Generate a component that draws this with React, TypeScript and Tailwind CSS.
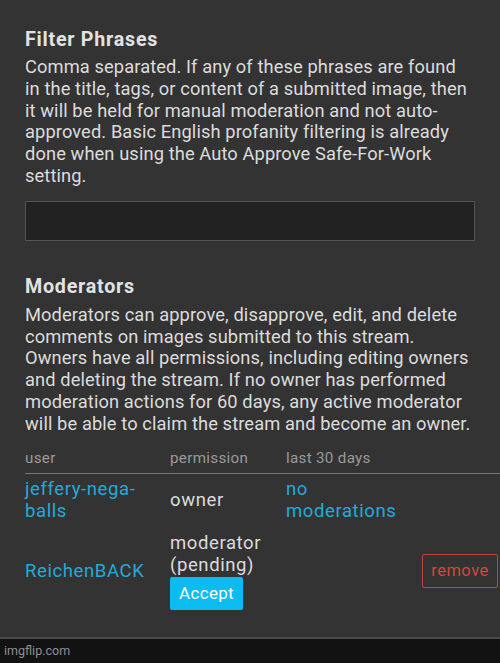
import React from 'react';

const moderators = [
    { user: 'jeffery-nega-balls', permission: 'owner', last: 'no moderations' },
];

const App = () => {
    return (
        <div className="w-[500px] h-[663px] bg-[#333333] flex flex-col overflow-hidden" style={{ fontFamily: 'Roboto, "Liberation Sans", sans-serif' }}>
            <div className="flex-1 pl-[25px]">
                {/* Filter phrases */}
                <div className="pr-[25px]">
                    <h2 className="mt-[28px] text-[19.7px] leading-[24px] tracking-[0.75px] font-bold text-[#e2e2e2]">Filter Phrases</h2>
                    <p className="mt-[4px] text-[18.3px] leading-[21.8px] tracking-[0.1px] text-[#dcdcdc]">
                        Comma separated. If any of these phrases are found in the title, tags, or content of a submitted image, then it will be held for manual moderation and not auto-approved. Basic English profanity filtering is already done when using the Auto Approve Safe-For-Work setting.
                    </p>
                    <input type="text" className="mt-[14px] block w-[450px] h-[40px] bg-[#222222] border border-[#555555] outline-none" />
                </div>

                {/* Moderators */}
                <div className="pr-[25px]">
                    <h2 className="mt-[34px] text-[19.7px] leading-[24px] tracking-[0.75px] font-bold text-[#e2e2e2]">Moderators</h2>
                    <p className="mt-[5px] text-[18.3px] leading-[21.8px] tracking-[0.1px] text-[#dcdcdc]">
                        Moderators can approve, disapprove, edit, and delete comments on images submitted to this stream. Owners have all permissions, including editing owners and deleting the stream. If no owner has performed moderation actions for 60 days, any active moderator will be able to claim the stream and become an owner.
                    </p>
                </div>

                <div className="mt-[13px] text-[15.2px] tracking-[0.3px]">
                    <div className="grid grid-cols-[145px_116px_1fr_80px] h-[26px] items-start border-b border-[#777777] text-[#9a9a9a] leading-[20px]">
                        <span>user</span>
                        <span>permission</span>
                        <span>last 30 days</span>
                        <span />
                    </div>
                    {moderators.map((m) => (
                        <div key={m.user} className="grid grid-cols-[145px_116px_1fr_80px] items-center pt-[4px] pb-[10px] text-[18.5px] leading-[22px] tracking-[0.6px]">
                            <span className="text-[#25a9da] pr-[10px]">jeffery-nega-<br />balls</span>
                            <span className="text-[#dcdcdc]">{m.permission}</span>
                            <span className="text-[#25a9da]">no<br />moderations</span>
                            <span />
                        </div>
                    ))}
                    <div className="grid grid-cols-[145px_116px_1fr_80px] items-center text-[18.5px] leading-[22px] tracking-[0.6px]">
                        <span className="text-[#25a9da]">ReichenBACK</span>
                        <div className="flex flex-col items-start text-[#dcdcdc]">
                            <span>moderator</span>
                            <span>(pending)</span>
                            <button className="mt-[1px] w-[73px] h-[33px] rounded-[2px] bg-[#0abcf0] text-white text-[17px] tracking-[0.3px]">Accept</button>
                        </div>
                        <span />
                        <div className="flex justify-start ml-[2px]">
                            <button className="w-[76px] h-[34px] border border-[#c04444] rounded-[2px] text-[#d64545] text-[16.5px] tracking-[0.5px]">remove</button>
                        </div>
                    </div>
                </div>
            </div>

            {/* footer */}
            <div className="h-[26px] border-t-2 border-[#4a4a4a] bg-[#121212] flex items-center px-[4px]">
                <span className="text-[12.5px] text-[#909090]">imgflip.com</span>
            </div>
        </div>
    );
};

export default App;
